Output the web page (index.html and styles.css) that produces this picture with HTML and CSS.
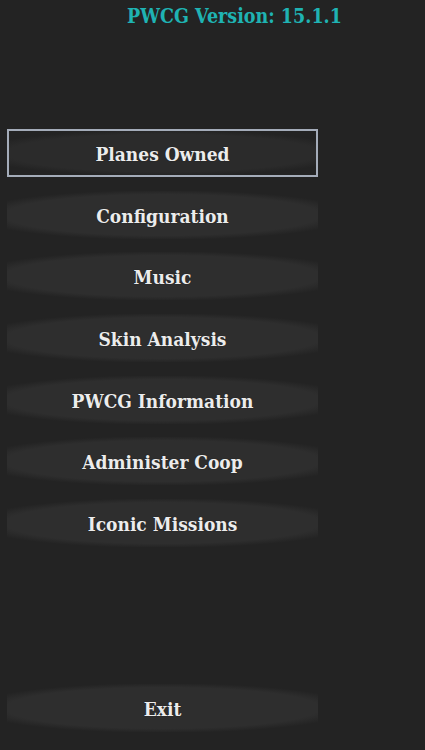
FILE: index.html
```html
<!DOCTYPE html>
<html lang="en">

<head>
    <meta charset="UTF-8">
    <meta name="viewport" content="width=device-width, initial-scale=1.0">
    <title>PWCG</title>
    <link rel="stylesheet" href="styles.css">
</head>

<body>
    <!-- 版本号 -->
    <div class="version">PWCG Version: 15.1.1</div>
    <!-- 菜单按钮 -->
    <div class="menu">
        <a href="javascript:;" class="btn selected">Planes Owned</a>
        <a href="javascript:;" class="btn">Configuration</a>
        <a href="javascript:;" class="btn">Music</a>
        <a href="javascript:;" class="btn">Skin Analysis</a>
        <a href="javascript:;" class="btn">PWCG Information</a>
        <a href="javascript:;" class="btn">Administer Coop</a>
        <a href="javascript:;" class="btn">Iconic Missions</a>
    </div>
    <!-- 退出 -->
    <div class="bottom">
        <a href="javascript:;" class="btn">Exit</a>
    </div>
</body>

</html>
```

FILE: styles.css
```css
* {
    margin: 0;
    padding: 0;
    box-sizing: border-box;
}

html,
body {
    height: 100%;
}

body {
    background-color: #232323;
    font-family: "DejaVu Serif", "Liberation Serif", serif;
    font-stretch: condensed;
    font-weight: bold;
    display: flex;
    flex-direction: column;
    padding: 0 107px 0 7px;
}

/* 版本号 */
.version {
    color: #1fb3b3;
    font-size: 19.5px;
    line-height: 22px;
    padding: 6px 0 0 37px;
    text-align: center;
    margin-right: -107px;
    height: 129px;
}

.menu {
    display: flex;
    flex-direction: column;
    gap: 13.67px;
}

.bottom {
    margin-top: auto;
    padding-bottom: 18px;
}

/* 按钮 */
.btn {
    display: block;
    height: 48px;
    line-height: 50px;
    text-align: center;
    color: #ececec;
    font-size: 19px;
    text-decoration: none;
    text-shadow: 0 0 1px rgba(0, 0, 0, 0.6);
    background: radial-gradient(ellipse 192px 25px at center, #2e2e2e 82%, rgba(46, 46, 46, 0) 100%);
}

.btn.selected {
    border: 2px solid #a4acb9;
    line-height: 46px;
    background: radial-gradient(ellipse 190px 23px at center, #2b2b2b 82%, rgba(43, 43, 43, 0) 100%);
}
```
